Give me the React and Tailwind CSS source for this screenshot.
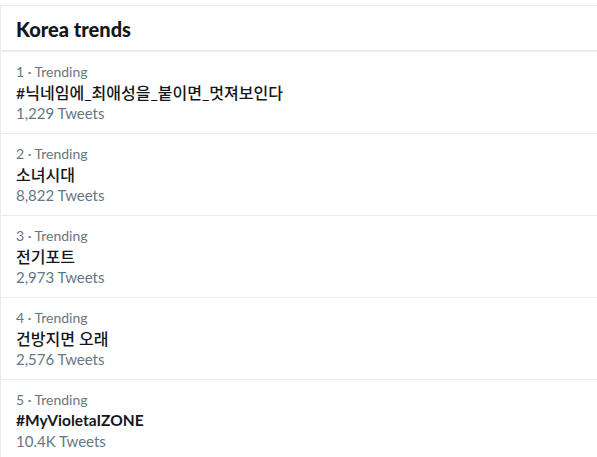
export default function App() {
  const trends = [
    { n: 1, name: "#닉네임에_최애성을_붙이면_멋져보인다", count: "1,229 Tweets", ko: true },
    { n: 2, name: "소녀시대", count: "8,822 Tweets", ko: true },
    { n: 3, name: "전기포트", count: "2,973 Tweets", ko: true },
    { n: 4, name: "건방지면 오래", count: "2,576 Tweets", ko: true },
    { n: 5, name: "#MyVioletaIZONE", count: "10.4K Tweets", ko: false },
  ];
  return (
    <div
      className="w-[597px] h-[457px] bg-white overflow-hidden pt-[5px]"
      style={{ fontFamily: 'Lato, "Noto Sans CJK KR", sans-serif' }}
    >
      <div className="border-t border-l border-[#e6ecf0]">
        <div className="px-[15px] h-[46px] flex items-center border-b-2 border-[#e6ecf0]">
          <h2 className="text-[20px] font-black text-[#14171a] leading-[24px] pt-[1px]">Korea trends</h2>
        </div>
        {trends.map((t) => (
          <div key={t.n} className="px-[15px] h-[82px] pt-[10px] border-b border-[#e6ecf0]">
            <div className="text-[14px] leading-[20px] text-[#657786]">{t.n} · Trending</div>
            <div
              className={
                t.ko
                  ? "text-[16px] leading-[21px] font-medium text-[#14171a]"
                  : "text-[15.5px] leading-[21px] font-bold text-[#14171a]"
              }
            >
              {t.name}
            </div>
            <div className="text-[15px] leading-[20px] text-[#657786]">{t.count}</div>
          </div>
        ))}
      </div>
    </div>
  );
}
